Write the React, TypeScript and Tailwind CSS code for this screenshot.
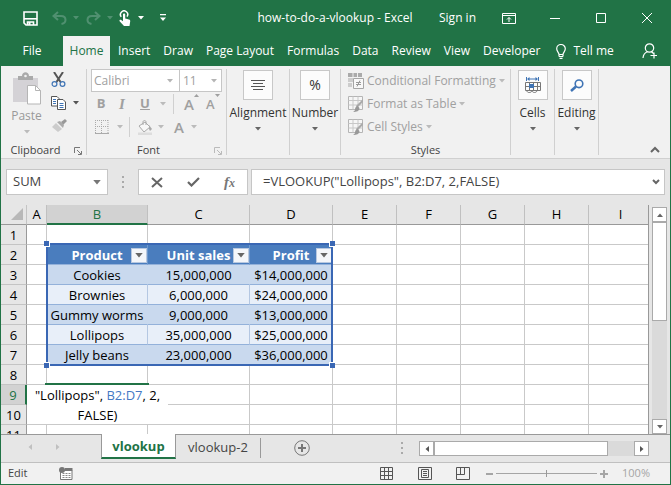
import { useState } from "react";
import type { ReactNode } from "react";
import clsx from "clsx";

const MENU_ITEMS = ["Insert", "Draw", "Page Layout", "Formulas", "Data", "Review", "View", "Developer"];

const COLUMNS = [
  { id: "A", width: "w-[20px]" },
  { id: "B", width: "w-[101px]" },
  { id: "C", width: "w-[102px]" },
  { id: "D", width: "w-[83px]" },
  { id: "E", width: "w-[64px]" },
  { id: "F", width: "w-[64px]" },
  { id: "G", width: "w-[64px]" },
  { id: "H", width: "w-[64px]" },
  { id: "I", width: "" },
];

const ROWS = [1, 2, 3, 4, 5, 6, 7, 8, 9, 10, 11];

// Sheet contents, keyed by row number, for columns B to D
const DATA: Record<number, string[]> = {
  2: ["Product", "Unit sales", "Profit"],
  3: ["Cookies", "15,000,000", "$14,000,000"],
  4: ["Brownies", "6,000,000", "$24,000,000"],
  5: ["Gummy worms", "9,000,000", "$13,000,000"],
  6: ["Lollipops", "35,000,000", "$25,000,000"],
  7: ["Jelly beans", "23,000,000", "$36,000,000"],
};

function Caret({ className, large }: { className?: string; large?: boolean }) {
  return (
    <svg viewBox="0 0 6 4" className={clsx("shrink-0", large ? "h-[5px] w-[8px]" : "h-[4px] w-[6px]", className)} fill="currentColor">
      <path d="M0 0h6L3 3.500z" />
    </svg>
  );
}

function SaveIcon() {
  return (
    <svg width="15" height="15" viewBox="0 0 15 15" fill="none" stroke="currentColor" strokeWidth="1.600">
      <path d="M1 1h13v13H3l-2-2z" />
      <path d="M1 7.800h13" />
      <path d="M4.500 14v-3h6v3" />
      <path d="M5.500 11h2v3h-2z" fill="currentColor" stroke="none" />
    </svg>
  );
}

function UndoIcon({ flip }: { flip?: boolean }) {
  return (
    <svg width="15" height="14" viewBox="0 0 15 14" fill="none" stroke="currentColor" strokeWidth="2" className={clsx(flip && "-scale-x-100")}>
      <path d="M6 1 1.500 5 6 9" />
      <path d="M2 5h7c3 0 4.500 1.500 4.500 4 0 2.200-1.500 3.500-4 4" />
    </svg>
  );
}

function TouchIcon() {
  return (
    <svg width="12" height="16" viewBox="0 0 12 16" fill="none" stroke="currentColor">
      <path d="M2.300 6.800A3.600 3.600 0 1 1 8 6.600" strokeWidth="1.500" />
      <path d="M4 4.500c0-1.300 2.200-1.300 2.200 0v4l3.800 1c1 .3 1.400 1 1.200 2L10.500 16H5L.6 11.300c-.6-1 .6-1.900 1.500-1.200L4 11.300z" fill="currentColor" stroke="none" />
    </svg>
  );
}

function TitleBar() {
  return (
    <header className="grid h-9 shrink-0 grid-cols-[1fr_auto_1fr] items-center pr-px text-white">
      <div className="flex items-center pl-[23px]">
        <button aria-label="Save"><SaveIcon /></button>
        <button aria-label="Undo" className="ml-[14px] flex items-center gap-1.5 text-[#509070]">
          <UndoIcon /><Caret />
        </button>
        <button aria-label="Redo" className="ml-[7px] flex items-center gap-1.5 text-[#509070]">
          <UndoIcon flip /><Caret />
        </button>
        <button aria-label="Touch mode" className="ml-1.5 flex items-center gap-[7px]">
          <TouchIcon /><Caret />
        </button>
        <button aria-label="Customize toolbar" className="ml-4">
          <svg width="6" height="8" viewBox="0 0 6 8" fill="currentColor">
            <path d="M0 0h6v1.300H0zM0 3.500h6L3 7z" />
          </svg>
        </button>
      </div>
      <h1 className="whitespace-nowrap text-[12px]">how-to-do-a-vlookup - Excel</h1>
      <div className="flex items-center justify-end">
        <button className="mr-2.5 whitespace-nowrap text-[12px]">Sign in</button>
        <button aria-label="Ribbon display options" className="flex w-[46px] justify-center">
          <svg width="14" height="11" viewBox="0 0 14 11" fill="none" stroke="currentColor">
            <path d="M.5.5h13v10H.5zM.5 2.500h13M7 9V4.500M5 6.500l2-2 2 2" />
          </svg>
        </button>
        <button aria-label="Minimize" className="flex w-[46px] justify-center">
          <svg width="10" height="11" viewBox="0 0 10 11" stroke="currentColor"><path d="M0 5.500h10" /></svg>
        </button>
        <button aria-label="Maximize" className="flex w-[46px] justify-center">
          <svg width="10" height="10" viewBox="0 0 10 10" fill="none" stroke="currentColor"><path d="M.5.5h9v9h-9z" /></svg>
        </button>
        <button aria-label="Close" className="flex w-[46px] justify-center">
          <svg width="10" height="10" viewBox="0 0 10 10" stroke="currentColor"><path d="m0 0 10 10M10 0 0 10" /></svg>
        </button>
      </div>
    </header>
  );
}

function MenuBar() {
  return (
    <nav className="flex h-[30px] shrink-0 items-stretch whitespace-nowrap bg-[#217346] text-[12px] text-white">
      <button className="w-[62px] shrink-0">File</button>
      <button className="w-[47px] shrink-0 bg-[#f1f1f1] text-[#217346]">Home</button>
      <div className="flex gap-[13px] pl-2">
        {MENU_ITEMS.map((item) => (
          <button key={item}>{item}</button>
        ))}
      </div>
      <button className="ml-4 flex items-center gap-[7px]">
        <svg width="10" height="15" viewBox="0 0 10 15" fill="none" stroke="currentColor" strokeWidth="1.200">
          <path d="M3 10.500C3 8.500.7 7.500.7 4.800a4.300 4.300 0 0 1 8.600 0C9.300 7.500 7 8.500 7 10.500zM3 12.500h4M3.500 14.300h3M3 10.500v2M7 10.500v2" />
        </svg>
        Tell me
      </button>
      <button aria-label="Share" className="ml-auto mr-3">
        <svg width="16" height="16" viewBox="0 0 16 16" fill="none" stroke="currentColor" strokeWidth="1.200">
          <circle cx="7.500" cy="5" r="4.200" />
          <path d="M1 15c.3-3.500 2-5.500 4.500-6.300M9.500 8.700l2 1.800M8.500 12.500H15M12 9.500v6" />
        </svg>
      </button>
    </nav>
  );
}

function Separator() {
  return <div className="my-[3px] w-px shrink-0 bg-[#d0d0d0]" />;
}

function Launcher({ className }: { className?: string }) {
  return (
    <button aria-label="More options" className={className}>
      <svg width="8" height="8" viewBox="0 0 8 8" fill="none" stroke="currentColor">
        <path d="M.5 6V.5H6M3 3l4 4M7.500 4v3.500H4" />
      </svg>
    </button>
  );
}

function GroupLabel({ children }: { children: ReactNode }) {
  return <div className="relative mt-auto h-4 text-center text-[11px] leading-4 text-[#444]">{children}</div>;
}

function BigButton({ label, width, children }: { label: string; width: string; children: ReactNode }) {
  return (
    <button className={clsx("flex shrink-0 flex-col items-center whitespace-nowrap pt-1 text-[12px] leading-4 text-[#333]", width)}>
      <span className="flex h-[30px] w-[30px] items-center justify-center border border-[#c8c8c8] bg-[#fcfcfc]">{children}</span>
      <span className="mt-[5px]">{label}</span>
      <Caret className="mt-[6px] text-[#666]" />
    </button>
  );
}

function ClipboardGroup() {
  return (
    <section className="flex w-[85px] shrink-0 flex-col">
      <div className="flex pl-[9px] pt-1.5">
        <button className="flex w-[33px] flex-col items-center text-[12px] leading-4 text-[#999]">
          <svg width="30" height="33" viewBox="0 0 30 33" fill="none">
            <path d="M1 6h25v24H1z" fill="#d4d2d6" />
            <path d="M6 8V4h4c0-5 7-5 7 0h4v4z" fill="#aaa" />
            <circle cx="13.500" cy="4" r="1.300" fill="#f1f1f1" />
            <path d="M15.500 13.500h8l5 5V32h-13z" fill="#fff" stroke="#b5b5b5" />
            <path d="M23.500 13.500v5h5" stroke="#b5b5b5" />
          </svg>
          <span className="mt-[3px]">Paste</span>
          <Caret className="mt-[6px] text-[#bbb]" />
        </button>
        <div className="ml-2 flex flex-col gap-[9px]">
          <button aria-label="Cut">
            <svg width="15" height="15" viewBox="0 0 15 15" fill="none">
              <path d="m3 0 6.500 10M12 0 5.500 10" stroke="#555" strokeWidth="2" />
              <circle cx="3.500" cy="12" r="2.400" stroke="#3f74b5" strokeWidth="1.200" />
              <circle cx="11.500" cy="12" r="2.400" stroke="#3f74b5" strokeWidth="1.200" />
            </svg>
          </button>
          <button aria-label="Copy" className="flex items-center gap-[7px] text-[#555]">
            <svg width="15" height="14" viewBox="0 0 15 14" fill="#fff" stroke="#555">
              <path d="M.5.5H6l2 2v7.500H.5z" />
              <path d="M2 3.500h3M2 5.500h3M2 7.500h3" stroke="#3f74b5" />
              <path d="M6.500 3.500H12l2.500 2.500v7.500h-8z" />
              <path d="M8.500 7.500h4M8.500 9.500h4M8.500 11.500h4" stroke="#3f74b5" />
            </svg>
            <Caret />
          </button>
          <button aria-label="Format painter">
            <svg width="16" height="14" viewBox="0 0 16 14">
              <path d="m10 3 4-3 2 2-4 4z" fill="#999" />
              <path d="m6 3 3-1 4 4-1 3z" fill="#aaa" />
              <path d="m5 4 6 6-4 3-6-5z" fill="#ccc" />
            </svg>
          </button>
        </div>
      </div>
      <GroupLabel>
        <span className="mr-4">Clipboard</span>
        <Launcher className="absolute right-1 top-[5px] text-[#777]" />
      </GroupLabel>
    </section>
  );
}

function FontGroup() {
  const [font, setFont] = useState("Calibri");
  const [size, setSize] = useState("11");
  return (
    <section className="flex w-[139px] shrink-0 flex-col text-[#a0a0a0]">
      <div className="mx-1 mt-[3px] flex h-[23px] text-[12px]">
        <label className="relative flex w-[89px] items-center border border-[#c6c6c6] bg-white">
          <select aria-label="Font" value={font} onChange={(e) => setFont(e.target.value)} className="w-full appearance-none bg-transparent pl-[2px] outline-none">
            <option>Calibri</option>
          </select>
          <Caret className="absolute right-1.5 text-[#b5b5b5]" />
        </label>
        <label className="relative -ml-px flex w-[43px] items-center border border-[#c6c6c6] bg-white">
          <select aria-label="Font size" value={size} onChange={(e) => setSize(e.target.value)} className="w-full appearance-none bg-transparent pl-[3px] outline-none">
            <option>11</option>
          </select>
          <Caret className="absolute right-1 text-[#b5b5b5]" />
        </label>
      </div>
      <div className="mt-px flex h-[22px] items-center pl-[9px] text-[13px]">
        <button className="w-[10px] font-bold">B</button>
        <button className="ml-3 w-2 font-['Liberation_Serif',serif] text-[15px] font-bold italic">I</button>
        <button className="ml-3.5 w-[10px] font-bold underline">U</button>
        <Caret className="ml-2.5 text-[#bbb]" />
        <div className="ml-[7px] h-5 w-px bg-[#d0d0d0]" />
        <button aria-label="Increase font size" className="ml-2.5 flex">
          <span className="text-[15px] font-semibold leading-5">A</span>
          <svg width="5" height="4" viewBox="0 0 5 4" fill="currentColor"><path d="M2.500 0 5 3H0z" /></svg>
        </button>
        <button aria-label="Decrease font size" className="ml-[7px] flex">
          <span className="text-[13px] font-semibold leading-5">A</span>
          <svg width="5" height="4" viewBox="0 0 5 4" fill="currentColor"><path d="M0 0h5L2.500 3z" /></svg>
        </button>
      </div>
      <div className="mt-px flex h-[22px] items-center pl-2">
        <button aria-label="Borders" className="flex items-center gap-2">
          <svg width="14" height="14" viewBox="0 0 14 14" stroke="#aaa">
            <path d="M0 .5h14M0 6.500h14M.5 0v14M6.500 0v14M13 0v14" strokeDasharray="1 1" />
            <path d="M0 13.500h14" />
          </svg>
          <Caret className="text-[#bbb]" />
        </button>
        <div className="ml-1.5 h-5 w-px bg-[#d0d0d0]" />
        <button aria-label="Fill color" className="ml-[7px] flex items-center gap-[5px]">
          <svg width="16" height="15" viewBox="0 0 16 15" fill="none">
            <path d="M2 6 8 2l5 5-6 5z" fill="#f8f8f8" stroke="#aaa" />
            <path d="M6 5V2c0-2 3-2 3 0v3" stroke="#aaa" />
            <path d="m12 5 3 4-2 2-1-2z" fill="#aaa" />
            <path d="M1 12.500h14V15H1z" fill="#ddd" />
          </svg>
          <Caret className="text-[#bbb]" />
        </button>
        <button aria-label="Font color" className="ml-2.5 flex items-center gap-[7px] text-[15px] font-semibold">
          A
          <Caret className="text-[#bbb]" />
        </button>
      </div>
      <GroupLabel>
        <span className="mr-4">Font</span>
        <Launcher className="absolute right-1 top-[5px] text-[#bbb]" />
      </GroupLabel>
    </section>
  );
}

function StyleIcon({ conditional }: { conditional?: boolean }) {
  if (conditional) {
    return (
      <svg width="16" height="16" viewBox="0 0 16 16" fill="none">
        <path d="M0 0h14v4H0z" fill="#aaa" />
        <path d="M0 5h5v4H0zM0 10h4v4H0z" fill="#ccc" />
        <path d="M5 0v4M9.500 0v4" stroke="#eee" />
        <path d="M5.500 5.500h10v10h-10z" fill="#f8f8f8" stroke="#a5a5a5" />
        <path d="M8 9.500h5M8 11.500h5M12 7.500l-3 6" stroke="#999" />
      </svg>
    );
  }
  return (
    <svg width="16" height="16" viewBox="0 0 16 16" fill="none">
      <path d="M.5.5h14v13H.5z" fill="#f6f6f6" stroke="#b5b5b5" />
      <path d="M.5 4.500h14M.5 9h14M5 .5v13M10 .5v13" stroke="#c8c8c8" />
      <path d="M15 3v3l-5 5-2-1z" fill="#aaa" />
      <path d="M9 9.500 11.500 12c0 3-3 4-6.500 4 2-1 2-2 2.200-4z" fill="#999" />
    </svg>
  );
}

function StylesGroup() {
  return (
    <section className="flex w-[169px] shrink-0 flex-col">
      <div className="flex flex-col pl-[7px] pt-[3px] text-[12px] text-[#a0a0a0]">
        {["Conditional Formatting", "Format as Table", "Cell Styles"].map((label, i) => (
          <button key={label} className="flex h-[23px] items-center gap-[3px] whitespace-nowrap">
            <StyleIcon conditional={i === 0} />
            {label}
            <Caret className="text-[#bbb]" />
          </button>
        ))}
      </div>
      <GroupLabel>Styles</GroupLabel>
    </section>
  );
}

function Ribbon() {
  return (
    <div className="flex h-[93px] shrink-0 border-b border-[#d0d0d0] bg-[#f1f1f1]">
      <ClipboardGroup />
      <Separator />
      <FontGroup />
      <Separator />
      <BigButton label="Alignment" width="w-[62px]">
        <svg width="14" height="11" viewBox="0 0 14 11" stroke="#555">
          <path d="M0 .5h14M2 3.500h10M0 6.500h14M2 9.500h10" />
        </svg>
      </BigButton>
      <Separator />
      <BigButton label="Number" width="w-[50px]">
        <span className="text-[14px]">%</span>
      </BigButton>
      <Separator />
      <StylesGroup />
      <Separator />
      <BigButton label="Cells" width="w-[43px]">
        <svg width="16" height="16" viewBox="0 0 16 16" fill="none">
          <path d="M1.500 0v4M13.500 0v4M3 2h9" stroke="#3f74b5" />
          <path d="m2 2 2.500-2v4zM13 2l-2.500-2v4z" fill="#3f74b5" />
          <path d="M.5 5.500h15v8H.5zM.5 9.500h15M4.500 5.500v8M8.500 5.500v8M12.500 5.500v8" stroke="#777" />
          <path d="M4 7h5v4H4z" fill="#3f74b5" />
          <path d="M2 14c0 2 4 2 5 0 1 2 4 2 5 0" stroke="#777" />
        </svg>
      </BigButton>
      <Separator />
      <BigButton label="Editing" width="w-[43px]">
        <svg width="14" height="13" viewBox="0 0 14 13" fill="none" stroke="#3f74b5">
          <circle cx="9" cy="4.800" r="3.800" strokeWidth="1.600" />
          <path d="M6 7.500 1 12" strokeWidth="2.500" />
        </svg>
      </BigButton>
      <Separator />
      <button aria-label="Collapse ribbon" className="mb-1 ml-auto mr-2.5 self-end">
        <svg width="10" height="8" viewBox="0 0 10 8" fill="none" stroke="#666" strokeWidth="2"><path d="m1 6 4-4 4 4" /></svg>
      </button>
    </div>
  );
}

function DragDots() {
  return (
    <svg width="2" height="12" viewBox="0 0 2 12" fill="#aaa" className="shrink-0">
      <path d="M0 0h2v2H0zM0 5h2v2H0zM0 10h2v2H0z" />
    </svg>
  );
}

function FormulaBar() {
  const [name, setName] = useState("SUM");
  const [formula, setFormula] = useState('=VLOOKUP("Lollipops", B2:D7, 2,FALSE)');
  return (
    <div className="flex h-[46px] shrink-0 items-center px-[5px] text-[13px] text-[#444]">
      <label className="flex h-[26px] w-[102px] shrink-0 items-center border border-[#c6c6c6] bg-white px-1.5">
        <input aria-label="Name box" value={name} onChange={(e) => setName(e.target.value)} className="w-full min-w-0 outline-none" />
        <Caret large className="text-[#777]" />
      </label>
      <div className="mx-[14px]"><DragDots /></div>
      <div className="flex h-[26px] w-[110px] shrink-0 items-center justify-between border border-[#c6c6c6] bg-white px-3">
        <button aria-label="Cancel">
          <svg width="12" height="11" viewBox="0 0 12 11" stroke="#666" strokeWidth="2"><path d="m1 1 10 9M11 1 1 10" /></svg>
        </button>
        <button aria-label="Enter">
          <svg width="13" height="10" viewBox="0 0 13 10" fill="none" stroke="#666" strokeWidth="2.200"><path d="m1 5 3.500 3.500L12 1" /></svg>
        </button>
        <button aria-label="Insert function" className="font-['Liberation_Serif',serif] text-[15px] font-bold italic leading-4 text-[#777]">
          f<span className="text-[12px]">x</span>
        </button>
      </div>
      <label className="ml-[3px] flex h-[26px] flex-1 items-center border border-[#c6c6c6] bg-white pl-[11px] pr-1">
        <input aria-label="Formula" value={formula} onChange={(e) => setFormula(e.target.value)} className="w-full min-w-0 outline-none" />
        <svg width="8" height="6" viewBox="0 0 8 6" fill="none" stroke="#666" strokeWidth="2" className="shrink-0"><path d="m1 1 3 3 3-3" /></svg>
      </label>
    </div>
  );
}

function FilterButton() {
  return (
    <button aria-label="Filter" className="absolute right-0 top-[3px] flex h-[15px] w-[16px] items-center justify-center border border-[#b8c8e0] bg-[#f4f6fa] text-[#666]">
      <Caret large />
    </button>
  );
}

function cellStyle(row: number, inTable: boolean) {
  if (!inTable) return "border-[#c9c9c9] bg-white";
  if (row === 2) return "border-b-[#93b1da] border-r-[#6d97cc] bg-[#4a7dbe] font-bold text-white";
  if (row % 2) return "border-b-[#93b1da] border-r-[#c9d9ee] bg-[#c9d9ee]";
  return "border-b-[#93b1da] border-r-[#b4c7e2] bg-[#e8eff9]";
}

function Sheet() {
  return (
    <div className="relative min-w-0 flex-1 overflow-hidden border-r border-[#999]">
      <table className="w-full table-fixed border-separate border-spacing-0 text-[13px] leading-[17px] text-black">
        <thead>
          <tr className="h-5">
            <th className="w-[26px] border-b border-r border-b-[#999] border-r-[#c4c4c4] p-0 align-bottom">
              <svg width="13" height="13" viewBox="0 0 13 13" fill="#b8b8b8" className="mb-[3px] ml-[10px]"><path d="M12 0v12H0z" /></svg>
            </th>
            {COLUMNS.map((col) => (
              <th
                key={col.id}
                className={clsx(
                  "border-r border-r-[#c0c0c0] p-0 font-normal last:border-r-0 last:pl-1",
                  col.width,
                  col.id === "B" ? "border-b-2 border-b-[#217346] bg-[#d2d2d2] text-[#217346]" : "border-b border-b-[#999]"
                )}
              >
                {col.id}
              </th>
            ))}
          </tr>
        </thead>
        <tbody>
          {ROWS.map((row) => (
            <tr key={row} className="h-5">
              <th
                className={clsx(
                  "border-b border-b-[#c4c4c4] p-0 pt-[2px] font-normal",
                  row === 9 ? "border-r-2 border-r-[#217346] bg-[#d2d2d2] text-[#217346]" : "border-r border-r-[#999]"
                )}
              >
                {row}
              </th>
              {COLUMNS.map((col, i) => {
                const value = DATA[row]?.[i - 1];
                return (
                  <td
                    key={col.id}
                    className={clsx("relative whitespace-nowrap border-b border-r p-0 pt-[2px] text-center last:border-r-0", cellStyle(row, value !== undefined))}
                  >
                    {value}
                    {row === 2 && value && <FilterButton />}
                  </td>
                );
              })}
            </tr>
          ))}
        </tbody>
      </table>

      {/* Highlighted lookup range B2:D7 */}
      <div className="pointer-events-none absolute left-[45px] top-[38px] h-[123px] w-[287px] border-2 border-[#3a67b4]">
        <i className="absolute -left-[4px] -top-[4px] size-[6px] border-b border-r border-white bg-[#3a67b4]" />
        <i className="absolute -right-[4px] -top-[4px] size-[6px] border-b border-l border-white bg-[#3a67b4]" />
        <i className="absolute -bottom-[4px] -left-[4px] size-[6px] border-r border-t border-white bg-[#3a67b4]" />
        <i className="absolute -bottom-[4px] -right-[4px] size-[6px] border-l border-t border-white bg-[#3a67b4]" />
      </div>

      {/* Cell editor that spills over B9 */}
      <div className="absolute left-[44px] top-[178px] h-[2px] w-[104px] bg-[#217346]" />
      <div className="absolute left-[26px] top-[180px] h-[39px] w-[141px] whitespace-nowrap bg-white text-center text-[13px] leading-5">
        "Lollipops", <span className="text-[#4478c4]">B2:D7</span>, 2,
        <br />
        FALSE)
      </div>
    </div>
  );
}

function VerticalScroll() {
  return (
    <div className="flex w-[21px] shrink-0 flex-col pl-[3px] pr-[3px] pt-[2px] text-[#666]">
      <button aria-label="Scroll up" className="flex h-[15px] items-center justify-center border border-[#aaa] bg-white">
        <Caret className="rotate-180" />
      </button>
      <div className="flex-1 bg-[#dadada]">
        <div className="h-1/2 border border-[#aaa] bg-white" />
      </div>
      <button aria-label="Scroll down" className="flex h-[15px] items-center justify-center border border-[#aaa] bg-white">
        <Caret />
      </button>
    </div>
  );
}

function SheetTabs() {
  return (
    <div className="flex h-[28px] shrink-0 items-start border-t border-[#999] text-[13px] text-[#444]">
      <button aria-label="Previous sheet" className="ml-[26px] mt-[10px] text-[#c0c0c0]"><Caret className="rotate-90" /></button>
      <button aria-label="Next sheet" className="ml-[22px] mt-[10px] text-[#c0c0c0]"><Caret className="-rotate-90" /></button>
      <button className="-mt-px ml-[40px] h-[25px] w-[75px] border-x border-b-2 border-x-[#999] border-b-[#217346] bg-white pt-[3px] font-bold text-[#217346]">
        vlookup
      </button>
      <button className="h-[25px] w-[84px] whitespace-nowrap pt-px">vlookup-2</button>
      <div className="mt-[3px] h-5 w-px bg-[#999]" />
      <button aria-label="New sheet" className="ml-[33px] mt-[5px]">
        <svg width="16" height="16" viewBox="0 0 16 16" fill="none" stroke="#777">
          <circle cx="8" cy="8" r="7.300" />
          <path d="M8 4v8M4 8h8" strokeWidth="2" />
        </svg>
      </button>
      <div className="ml-auto mt-[7px]"><DragDots /></div>
      <div className="ml-4 mr-[21px] mt-1.5 flex h-[15px] w-[230px] text-[#555]">
        <button aria-label="Scroll left" className="flex w-[15px] shrink-0 items-center justify-center border border-[#aaa] bg-white">
          <Caret className="rotate-90" />
        </button>
        <div className="flex-1 bg-[#dadada]">
          <div className="h-full w-[87%] border border-[#aaa] bg-white" />
        </div>
        <button aria-label="Scroll right" className="flex w-[15px] shrink-0 items-center justify-center border border-[#aaa] bg-white">
          <Caret className="-rotate-90" />
        </button>
      </div>
    </div>
  );
}

function StatusBar() {
  const [zoom, setZoom] = useState(50);
  return (
    <footer className="flex h-[22px] shrink-0 items-center border-t border-[#c0c0c0] bg-[#f1f1f1] pl-[7px] text-[11px] text-[#444]">
      <span>Edit</span>
      <button aria-label="Record macro" className="ml-[31px]">
        <svg width="14" height="13" viewBox="0 0 14 13" fill="none">
          <path d="M1.500 3.500h11.500v9H1.500z" fill="#fff" stroke="#777" />
          <path d="M6 1h7.500v3H6z" fill="#777" />
          <path d="M3.500 6.500h8M3.500 8.500h8M3.500 10.500h8" stroke="#888" strokeDasharray="2 1" />
          <circle cx="3" cy="3" r="3" fill="#777" />
        </svg>
      </button>
      <div className="ml-auto flex items-center gap-6 text-[#555]">
        <button aria-label="Normal view">
          <svg width="14" height="13" viewBox="0 0 14 13" fill="none" stroke="currentColor">
            <path d="M.5.5h12v12H.5zM.5 4.500h12M.5 8.500h12M4.500.5v12M8.500.5v12" />
          </svg>
        </button>
        <button aria-label="Page layout view">
          <svg width="14" height="13" viewBox="0 0 14 13" fill="none" stroke="currentColor">
            <path d="M.5.5h13v12H.5zM3.500 2.500h7v8h-7zM5 4.500h4M5 6.500h4M5 8.500h4" />
          </svg>
        </button>
        <button aria-label="Page break view">
          <svg width="14" height="13" viewBox="0 0 14 13" fill="none" stroke="currentColor">
            <path d="M.5.5h13v12H.5zM.5 7.500h8v-7M4.500.5v7" />
          </svg>
        </button>
      </div>
      <button aria-label="Zoom out" className="ml-4 h-[2px] w-[7px] bg-[#a5a5a5]" />
      <label className="relative ml-[3px] flex h-4 w-[101px] items-center">
        <input
          type="range"
          aria-label="Zoom"
          value={zoom}
          onChange={(e) => setZoom(Number(e.target.value))}
          className="h-px w-full appearance-none bg-[#a5a5a5] outline-none [&::-webkit-slider-thumb]:h-[7px] [&::-webkit-slider-thumb]:w-px [&::-webkit-slider-thumb]:appearance-none [&::-webkit-slider-thumb]:bg-[#999]"
        />
      </label>
      <button aria-label="Zoom in" className="ml-[3px]">
        <svg width="8" height="8" viewBox="0 0 8 8" stroke="#a5a5a5" strokeWidth="2"><path d="M4 0v8M0 4h8" /></svg>
      </button>
      <span className="ml-[14px] mr-5 text-[#a5a5a5]">100%</span>
    </footer>
  );
}

export default function App() {
  return (
    <div className="flex h-screen flex-col overflow-hidden bg-[#217346] font-['Open_Sans',sans-serif]">
      <TitleBar />
      <div className="flex min-h-0 flex-1 flex-col border border-t-0 border-[#217346] bg-[#e6e6e6]">
        <MenuBar />
        <Ribbon />
        <FormulaBar />
        <main className="flex min-h-0 flex-1">
          <Sheet />
          <VerticalScroll />
        </main>
        <SheetTabs />
        <StatusBar />
      </div>
    </div>
  );
}
